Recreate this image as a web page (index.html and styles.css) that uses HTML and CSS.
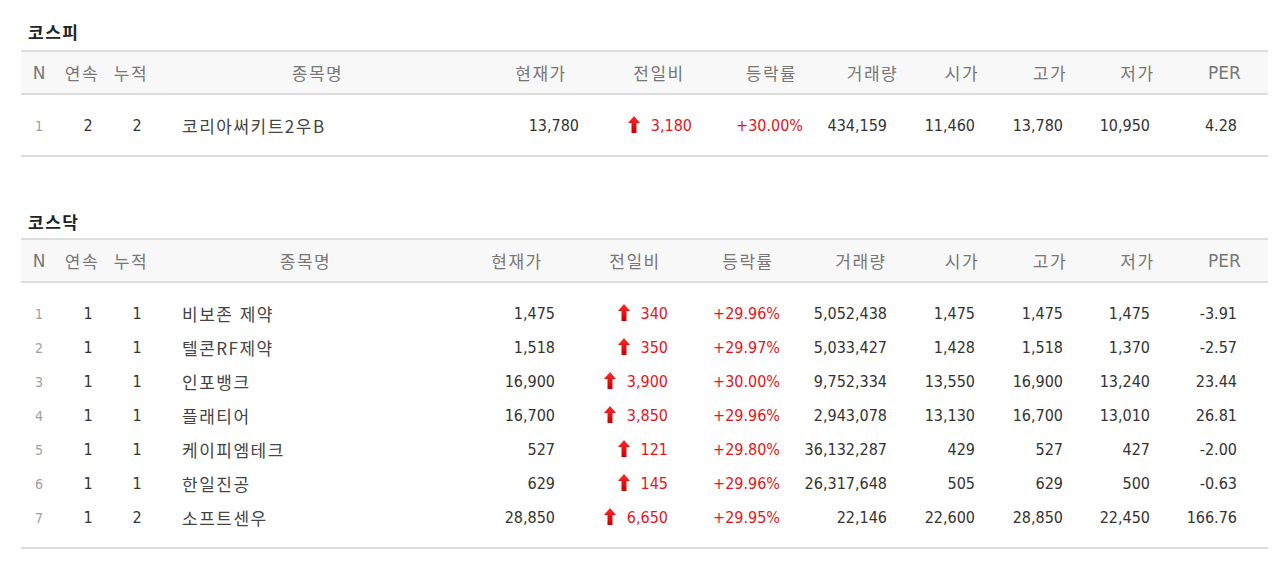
FILE: index.html
```html
<!DOCTYPE html>
<html lang="ko">
<head>
<meta charset="utf-8">
<title>상한가</title>
<link rel="stylesheet" href="styles.css">
</head>
<body>
<svg width="0" height="0" class="defs" aria-hidden="true">
  <defs>
    <linearGradient id="upg" x1="0" y1="0" x2="0" y2="1">
      <stop offset="0" stop-color="#ff2a2a"/>
      <stop offset="1" stop-color="#c80000"/>
    </linearGradient>
  </defs>
</svg>
<div class="page">
  <section class="market">
    <h2 class="title">코스피</h2>
    <table class="stocks kospi">
      <colgroup>
        <col class="c-n"><col class="c-a"><col class="c-b"><col class="c-name1">
        <col class="c-cur"><col class="c-diff"><col class="c-rate1"><col class="c-vol1">
        <col class="c-p"><col class="c-p"><col class="c-p2"><col class="c-p2">
      </colgroup>
      <thead>
        <tr><th class="lat">N</th><th>연속</th><th>누적</th><th>종목명</th><th>현재가</th><th>전일비</th><th>등락률</th><th>거래량</th><th>시가</th><th>고가</th><th>저가</th><th class="lat">PER</th></tr>
      </thead>
      <tbody>
        <tr><td class="rank">1</td><td class="cnt">2</td><td class="cnt">2</td><td class="name">코리아써키트2우B</td><td class="num cur">13,780</td><td class="num diff up"><svg class="arrow" viewBox="0 0 12 17"><path d="M6 0 L12 7 L8.5 7 L8.5 17 L3.5 17 L3.5 7 L0 7 Z" fill="url(#upg)"/></svg>3,180</td><td class="num diff up">+30.00%</td><td class="num wide">434,159</td><td class="num wide">11,460</td><td class="num wide">13,780</td><td class="num wide">10,950</td><td class="num wide">4.28</td></tr>
      </tbody>
    </table>
  </section>

  <section class="market second">
    <h2 class="title">코스닥</h2>
    <table class="stocks kosdaq">
      <colgroup>
        <col class="c-n"><col class="c-a"><col class="c-b"><col class="c-name2">
        <col class="c-cur"><col class="c-diff"><col class="c-rate2"><col class="c-vol2">
        <col class="c-p"><col class="c-p"><col class="c-p2"><col class="c-p2">
      </colgroup>
      <thead>
        <tr><th class="lat">N</th><th>연속</th><th>누적</th><th>종목명</th><th>현재가</th><th>전일비</th><th>등락률</th><th>거래량</th><th>시가</th><th>고가</th><th>저가</th><th class="lat">PER</th></tr>
      </thead>
      <tbody>
        <tr><td class="rank">1</td><td class="cnt">1</td><td class="cnt">1</td><td class="name">비보존 제약</td><td class="num cur">1,475</td><td class="num diff up"><svg class="arrow" viewBox="0 0 12 17"><path d="M6 0 L12 7 L8.5 7 L8.5 17 L3.5 17 L3.5 7 L0 7 Z" fill="url(#upg)"/></svg>340</td><td class="num diff up">+29.96%</td><td class="num wide">5,052,438</td><td class="num wide">1,475</td><td class="num wide">1,475</td><td class="num wide">1,475</td><td class="num wide">-3.91</td></tr>
        <tr><td class="rank">2</td><td class="cnt">1</td><td class="cnt">1</td><td class="name">텔콘RF제약</td><td class="num cur">1,518</td><td class="num diff up"><svg class="arrow" viewBox="0 0 12 17"><path d="M6 0 L12 7 L8.5 7 L8.5 17 L3.5 17 L3.5 7 L0 7 Z" fill="url(#upg)"/></svg>350</td><td class="num diff up">+29.97%</td><td class="num wide">5,033,427</td><td class="num wide">1,428</td><td class="num wide">1,518</td><td class="num wide">1,370</td><td class="num wide">-2.57</td></tr>
        <tr><td class="rank">3</td><td class="cnt">1</td><td class="cnt">1</td><td class="name">인포뱅크</td><td class="num cur">16,900</td><td class="num diff up"><svg class="arrow" viewBox="0 0 12 17"><path d="M6 0 L12 7 L8.5 7 L8.5 17 L3.5 17 L3.5 7 L0 7 Z" fill="url(#upg)"/></svg>3,900</td><td class="num diff up">+30.00%</td><td class="num wide">9,752,334</td><td class="num wide">13,550</td><td class="num wide">16,900</td><td class="num wide">13,240</td><td class="num wide">23.44</td></tr>
        <tr><td class="rank">4</td><td class="cnt">1</td><td class="cnt">1</td><td class="name">플래티어</td><td class="num cur">16,700</td><td class="num diff up"><svg class="arrow" viewBox="0 0 12 17"><path d="M6 0 L12 7 L8.5 7 L8.5 17 L3.5 17 L3.5 7 L0 7 Z" fill="url(#upg)"/></svg>3,850</td><td class="num diff up">+29.96%</td><td class="num wide">2,943,078</td><td class="num wide">13,130</td><td class="num wide">16,700</td><td class="num wide">13,010</td><td class="num wide">26.81</td></tr>
        <tr><td class="rank">5</td><td class="cnt">1</td><td class="cnt">1</td><td class="name">케이피엠테크</td><td class="num cur">527</td><td class="num diff up"><svg class="arrow" viewBox="0 0 12 17"><path d="M6 0 L12 7 L8.5 7 L8.5 17 L3.5 17 L3.5 7 L0 7 Z" fill="url(#upg)"/></svg>121</td><td class="num diff up">+29.80%</td><td class="num wide">36,132,287</td><td class="num wide">429</td><td class="num wide">527</td><td class="num wide">427</td><td class="num wide">-2.00</td></tr>
        <tr><td class="rank">6</td><td class="cnt">1</td><td class="cnt">1</td><td class="name">한일진공</td><td class="num cur">629</td><td class="num diff up"><svg class="arrow" viewBox="0 0 12 17"><path d="M6 0 L12 7 L8.5 7 L8.5 17 L3.5 17 L3.5 7 L0 7 Z" fill="url(#upg)"/></svg>145</td><td class="num diff up">+29.96%</td><td class="num wide">26,317,648</td><td class="num wide">505</td><td class="num wide">629</td><td class="num wide">500</td><td class="num wide">-0.63</td></tr>
        <tr><td class="rank">7</td><td class="cnt">1</td><td class="cnt">2</td><td class="name">소프트센우</td><td class="num cur">28,850</td><td class="num diff up"><svg class="arrow" viewBox="0 0 12 17"><path d="M6 0 L12 7 L8.5 7 L8.5 17 L3.5 17 L3.5 7 L0 7 Z" fill="url(#upg)"/></svg>6,650</td><td class="num diff up">+29.95%</td><td class="num wide">22,146</td><td class="num wide">22,600</td><td class="num wide">28,850</td><td class="num wide">22,450</td><td class="num wide">166.76</td></tr>
      </tbody>
    </table>
  </section>
</div>
</body>
</html>
```

FILE: styles.css
```css
html, body {
  margin: 0;
  padding: 0;
  background: #ffffff;
}

.defs {
  position: absolute;
  width: 0;
  height: 0;
}

.page {
  padding: 22px 12px 0 21px;
  font-family: "DejaVu Sans Condensed", "DejaVu Sans", "Noto Sans CJK KR", sans-serif;
  font-stretch: condensed;
  color: #333;
}

.market.second {
  margin-top: 55px;
}

.title {
  margin: 0 0 8px 7px;
  font-family: "Noto Sans CJK KR", sans-serif;
  font-size: 17px;
  line-height: 20px;
  font-weight: 700;
  color: #222;
  letter-spacing: 1.5px;
}

.second .title {
  margin-bottom: 6px;
}

.stocks {
  width: 1247px;
  table-layout: fixed;
  border-collapse: collapse;
  font-size: 16px;
}

.c-n { width: 36px; }
.c-a { width: 50px; }
.c-b { width: 48px; }
.c-name1 { width: 325px; }
.c-name2 { width: 301px; }
.c-cur { width: 122px; }
.c-diff { width: 114px; }
.c-rate1 { width: 111px; }
.c-rate2 { width: 112px; }
.c-vol1 { width: 91px; }
.c-vol2 { width: 114px; }
.c-p { width: 88px; }
.c-p2 { width: 87px; }

.stocks thead th {
  height: 41px;
  padding: 0;
  line-height: 20px;
  background: #f8f8f8;
  border-top: 2px solid #dddddd;
  border-bottom: 2px solid #dddddd;
  font-family: "Noto Sans CJK KR", sans-serif;
  font-weight: 400;
  font-size: 17px;
  color: #777;
  letter-spacing: 1.5px;
  text-align: center;
  vertical-align: middle;
}

.stocks thead th.lat {
  font-family: "DejaVu Sans", sans-serif;
  font-stretch: normal;
  letter-spacing: 0;
}

.stocks tbody td {
  padding: 0;
  height: 34px;
  line-height: 34px;
  vertical-align: middle;
  white-space: nowrap;
}

.stocks tbody tr:first-child td {
  padding-top: 14px;
}

.stocks tbody tr:last-child td {
  padding-bottom: 12px;
  border-bottom: 2px solid #dddddd;
}

.rank {
  text-align: center;
  font-size: 14px;
  color: #a0a0a0;
}

.cnt {
  text-align: center;
  padding-left: 12px !important;
  color: #333;
}

.name {
  padding-left: 27px !important;
  font-family: "Noto Sans CJK KR", sans-serif;
  font-size: 17px;
  color: #444;
  letter-spacing: 1.5px;
}

.num {
  text-align: right;
}

.num.cur {
  padding-right: 23px !important;
}

.num.diff {
  padding-right: 24px !important;
}

.num.wide {
  padding-right: 31px !important;
}

.up {
  color: #e8141a;
}

.arrow {
  width: 12px;
  height: 17px;
  margin-right: 11px;
  vertical-align: -2px;
}
```
